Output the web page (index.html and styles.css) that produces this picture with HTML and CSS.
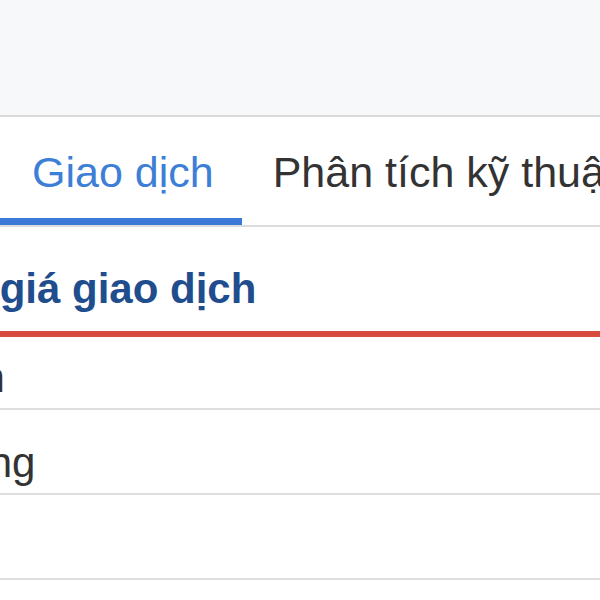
FILE: index.html
```html
<!DOCTYPE html>
<html lang="vi">
<head>
  <meta charset="UTF-8">
  <meta name="viewport" content="width=device-width, initial-scale=1.0">
  <title>Giao dịch</title>
  <link rel="stylesheet" href="styles.css">
</head>
<body>
  <div class="topbar"></div>

  <div class="tabs">
    <div class="tab active">Giao dịch</div>
    <div class="tab">Phân tích kỹ thuật</div>
  </div>

  <div class="section">
    <div class="section-inner">
      <h3 class="section-title">Bảng giá giao dịch</h3>
      <div class="rows">
        <div class="row">Thời gian</div>
        <div class="row">Khối lượng</div>
        <div class="row">Giá</div>
        <div class="row"></div>
      </div>
    </div>
  </div>
</body>
</html>
```

FILE: styles.css
```css
body {
  font-family: "Liberation Sans", Arial, sans-serif;
  background-color: #fff;
  color: #333;
  margin: 0;
  padding: 0;
  overflow: hidden;
}
.topbar {
  height: 115px;
  background-color: #f7f8fa;
  border-bottom: 2px solid #dadada;
}
.tabs {
  display: flex;
  align-items: flex-end;
  border-bottom: 2px solid #dcdcdc;
  white-space: nowrap;
}
.tab {
  font-size: 43px;
  line-height: 48px;
  padding: 31px 28px 29px 31px;
  color: #333;
}
.tab.active {
  color: #3d7ed6;
  padding-left: 32px;
  padding-bottom: 22px;
  border-bottom: 7px solid #3a79d6;
}
.section {
  overflow: hidden;
}
.section-inner {
  margin-left: -117px;
}
.section-title {
  margin: 0;
  font-size: 42px;
  line-height: 48px;
  font-weight: bold;
  color: #1f4d8d;
  padding: 38px 0 18px;
  border-bottom: 6px solid #d84b3f;
  white-space: nowrap;
}
.rows .row {
  display: flex;
  align-items: flex-end;
  height: 85px;
  padding-bottom: 6px;
  box-sizing: border-box;
  font-size: 42px;
  line-height: 48px;
  border-bottom: 2px solid #dedede;
  white-space: nowrap;
  margin-left: -55px;
}
.rows .row:first-child {
  height: 73px;
}
```
